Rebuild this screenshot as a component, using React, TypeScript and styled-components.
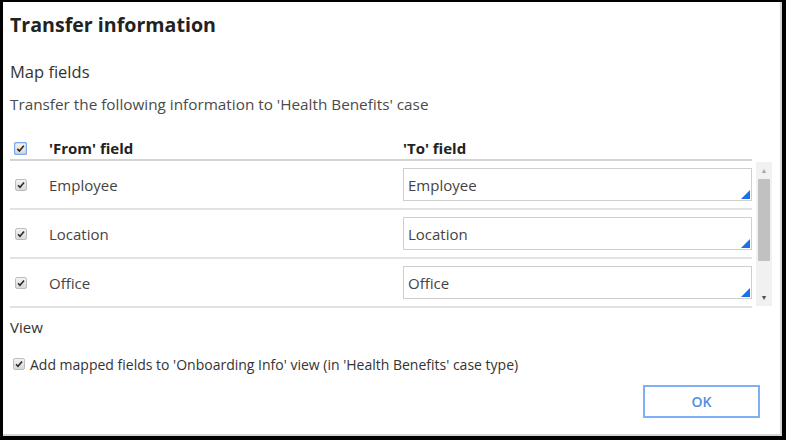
import React from 'react';
import styled, { createGlobalStyle } from 'styled-components';

const GlobalStyle = createGlobalStyle`
  html, body {
    margin: 0;
    padding: 0;
    background: #fff;
  }
  * {
    box-sizing: border-box;
  }
`;

const Frame = styled.div`
  width: 786px;
  height: 440px;
  border-style: solid;
  border-color: #000;
  border-width: 2px 4px 4px 3px;
  background: #fff;
  box-shadow: inset -2px -2px 0 #d6d6d6;
  font-family: 'Open Sans', 'Noto Sans', sans-serif;
  color: #333;
  padding: 10px 10px 0 7px;
  display: flex;
  flex-direction: column;
  overflow: hidden;

  & > * {
    flex-shrink: 0;
  }
`;

const Title = styled.h1`
  margin: 0;
  font-size: 19.6px;
  font-weight: 700;
  line-height: 26px;
  color: #222;
`;

const Section = styled.h2<{ $top: number; $size: number }>`
  margin: ${(p) => p.$top}px 0 0;
  font-size: ${(p) => p.$size}px;
  font-weight: 400;
  line-height: 22px;
  color: #333;
`;

const Description = styled.p`
  margin: 11px 0 0;
  font-size: 15.3px;
  line-height: 20px;
  color: #4a4a4a;
`;

const Table = styled.div`
  margin-top: 23px;
  display: flex;
  flex-direction: column;
`;

const HeaderRow = styled.div`
  width: 742px;
  height: 24px;
  display: grid;
  grid-template-columns: 39px 354px 1fr;
  align-items: center;
  border-bottom: 2px solid #d4d4d4;
  font-size: 15px;
  font-weight: 700;
  color: #222;
`;

const Body = styled.div`
  display: flex;
  gap: 4px;
`;

const Viewport = styled.div`
  width: 742px;
  height: 147px;
  overflow: hidden;
`;

const Row = styled.div`
  height: 49px;
  display: grid;
  grid-template-columns: 39px 354px 1fr;
  align-items: center;
  border-bottom: 2px solid #e2e2e2;
  font-size: 15px;
  color: #444;
`;

const BoxCell = styled.div<{ $pad: number }>`
  display: flex;
  align-items: center;
  padding-left: ${(p) => p.$pad}px;
`;

const Field = styled.div`
  position: relative;
  height: 33px;
  border: 1px solid #cfcfcf;
  padding: 0 4px;
  display: flex;
  align-items: center;
  font-size: 15px;
  color: #444;
`;

const Corner = styled.span`
  position: absolute;
  right: 1px;
  bottom: 1px;
  width: 0;
  height: 0;
  border-style: solid;
  border-width: 0 0 9px 9px;
  border-color: transparent transparent #1d6fe8 transparent;
`;

const ScrollBar = styled.div`
  margin-top: 1px;
  width: 16px;
  height: 144px;
  background: #f1f1f1;
  display: flex;
  flex-direction: column;
  align-items: center;
`;

const Arrow = styled.div<{ $dim?: boolean }>`
  height: 17px;
  display: flex;
  align-items: center;
  justify-content: center;
  font-size: 7px;
  color: ${(p) => (p.$dim ? '#a8a8a8' : '#505050')};
`;

const Thumb = styled.div`
  width: 12px;
  height: 82px;
  background: #c1c1c1;
`;

const Spacer = styled.div`
  flex: 1;
`;

const CheckLine = styled.label`
  margin-top: 16px;
  height: 20px;
  display: flex;
  align-items: center;
  gap: 5px;
  padding-left: 3px;
  font-size: 14px;
  color: #333;
`;

const Footer = styled.div`
  display: flex;
  justify-content: flex-end;
  padding-right: 12px;
  margin-top: 11px;
`;

const OkButton = styled.button`
  width: 117px;
  height: 33px;
  border: 2px solid #7eb0f5;
  background: #fff;
  color: #4d8fe6;
  font-family: 'Open Sans', 'Noto Sans', sans-serif;
  font-size: 14px;
  font-weight: 600;
  cursor: pointer;
`;

const CheckBox = ({ focused = false }: { focused?: boolean }) => (
  <svg width={focused ? 13 : 12} height={focused ? 13 : 12} viewBox="0 0 13 13">
    <defs>
      <linearGradient id={focused ? 'cbf' : 'cb'} x1="0" y1="0" x2="0" y2="1">
        <stop offset="0" stopColor="#f4f4f4" />
        <stop offset="1" stopColor="#d8d8d8" />
      </linearGradient>
    </defs>
    <rect
      x="0.5"
      y="0.5"
      width="12"
      height="12"
      rx="2"
      fill={`url(#${focused ? 'cbf' : 'cb'})`}
      stroke={focused ? '#7aa9f0' : '#b4b4b4'}
      strokeWidth={focused ? 1.4 : 1}
    />
    <path d="M3.3 6.8 L5.4 9 L9.8 3.8" fill="none" stroke="#2a2a2a" strokeWidth="1.7" />
  </svg>
);

const rows = ['Employee', 'Location', 'Office'];

export default function App() {
  return (
    <>
      <GlobalStyle />
      <Frame>
        <Title>Transfer information</Title>
        <Section $top={23} $size={16.5}>
          Map fields
        </Section>
        <Description>Transfer the following information to 'Health Benefits' case</Description>
        <Table>
          <HeaderRow>
            <BoxCell $pad={4}>
              <CheckBox focused />
            </BoxCell>
            <span>'From' field</span>
            <span>'To' field</span>
          </HeaderRow>
          <Body>
            <Viewport>
              {rows.map((name) => (
                <Row key={name}>
                  <BoxCell $pad={5}>
                    <CheckBox />
                  </BoxCell>
                  <span>{name}</span>
                  <Field>
                    {name}
                    <Corner />
                  </Field>
                </Row>
              ))}
            </Viewport>
            <ScrollBar>
              <Arrow $dim>▲</Arrow>
              <Thumb />
              <Spacer />
              <Arrow>▼</Arrow>
            </ScrollBar>
          </Body>
        </Table>
        <Section $top={8} $size={15}>
          View
        </Section>
        <CheckLine>
          <CheckBox />
          Add mapped fields to 'Onboarding Info' view (in 'Health Benefits' case type)
        </CheckLine>
        <Footer>
          <OkButton>OK</OkButton>
        </Footer>
      </Frame>
    </>
  );
}
